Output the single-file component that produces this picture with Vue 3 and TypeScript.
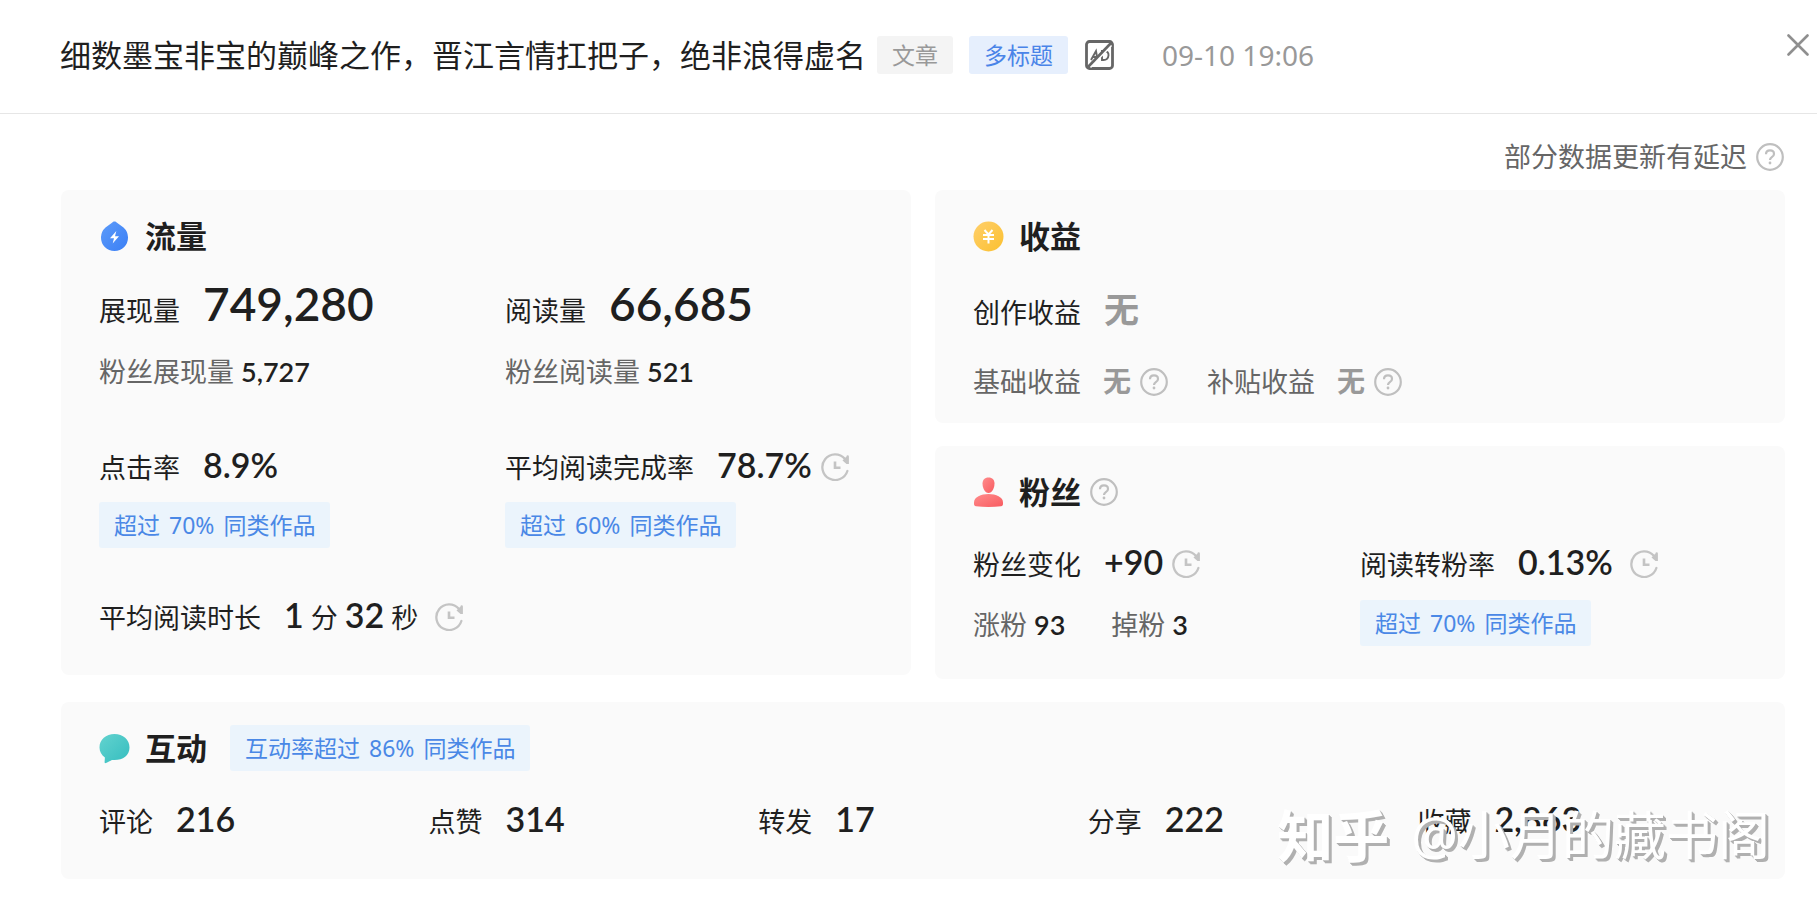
<script setup lang="ts">
import { defineComponent, h } from 'vue'

interface Interaction {
  label: string
  value: string
}

const interactions: Interaction[] = [
  { label: '评论', value: '216' },
  { label: '点赞', value: '314' },
  { label: '转发', value: '17' },
  { label: '分享', value: '222' },
  { label: '收藏', value: '2,863' },
]

const HelpIcon = defineComponent(() => () =>
  h('svg', { width: 28, height: 28, viewBox: '0 0 28 28', fill: 'none', 'aria-hidden': 'true' }, [
    h('circle', { cx: 14, cy: 14, r: 12.8, stroke: '#bfbfbf', 'stroke-width': 2.2 }),
    h('path', {
      d: 'M10 11.2c0-2.3 1.7-3.8 4-3.8s4 1.4 4 3.5c0 1.7-1 2.5-2.2 3.3-1.2.8-1.8 1.4-1.8 2.8',
      stroke: '#bfbfbf',
      'stroke-width': 2.2,
    }),
    h('circle', { cx: 14, cy: 20, r: 1.4, fill: '#bfbfbf' }),
  ]),
)

const ClockIcon = defineComponent(() => () =>
  h('svg', { width: 28, height: 28, viewBox: '0 0 28 28', fill: 'none', 'aria-hidden': 'true' }, [
    h('path', {
      d: 'M26.400 18A12.800 12.800 0 1 1 23.800 5.800',
      stroke: '#c4c4c4',
      'stroke-width': 2.3,
      'stroke-linecap': 'round',
    }),
    h('path', { d: 'M25.500 3.500a1.200 1.200 0 0 1 2.400 0v7.500h-2.400l-4-3.500z', fill: '#c4c4c4' }),
    h('path', { d: 'M14 8.500v6.200h5.500', stroke: '#c4c4c4', 'stroke-width': 2.6 }),
  ]),
)
</script>

<template>
  <div class="page">
    <header class="header">
      <h1 class="title">细数墨宝非宝的巅峰之作，晋江言情扛把子，绝非浪得虚名</h1>
      <span class="tag">文章</span>
      <span class="tag tag-blue">多标题</span>
      <svg class="ad-icon" width="29" height="30" viewBox="0 0 29 30" fill="none" aria-hidden="true">
        <rect x="1.5" y="1.5" width="26" height="27" rx="3" stroke="#666" stroke-width="2.8" />
        <path d="M6 20l5-9 1.6 9M8 17h5M17 20v-9h2.5c6 0 5 9-1 9z" stroke="#666" stroke-width="1.9" />
        <path d="M5 27L26 5" stroke="#fff" stroke-width="3" />
        <path d="M2 28L27 2" stroke="#666" stroke-width="2.6" />
      </svg>
      <time class="date">09-10 19:06</time>
      <button class="close" type="button" aria-label="关闭">
        <svg width="22" height="22" viewBox="0 0 22 22" aria-hidden="true">
          <path d="M1.5 1.5l19 19M20.5 1.5l-19 19" stroke="#8f8f8f" stroke-width="2.6" stroke-linecap="round" />
        </svg>
      </button>
    </header>

    <main class="main">
      <div class="notice">
        <span>部分数据更新有延迟</span>
        <HelpIcon />
      </div>

      <div class="grid">
        <section class="card traffic">
          <h2 class="card-title">
            <svg width="31" height="31" viewBox="0 0 31 31" aria-hidden="true">
              <defs>
                <linearGradient id="drop" x1="0" y1="0" x2="1" y2="1">
                  <stop offset="0" stop-color="#5c9bfa" />
                  <stop offset="1" stop-color="#3b7ff5" />
                </linearGradient>
              </defs>
              <path d="M15.5.5c1 0 1.600.5 2.500 1.200L24.500 6.500A13.500 13.500 0 1 1 6.500 6.500L13 1.700C13.900 1 14.500.5 15.500.5z" fill="url(#drop)" />
              <path d="M17.300 10l-6.300 7.300h4l-1.300 5.200 6.300-7.300h-4z" fill="#fff" />
            </svg>
            <span>流量</span>
          </h2>
          <div class="columns">
            <div>
              <div class="row row-big"><span>展现量</span><b class="num-big">749,280</b></div>
              <div class="sub"><span>粉丝展现量</span><b class="num-small">5,727</b></div>
            </div>
            <div>
              <div class="row row-big"><span>阅读量</span><b class="num-big">66,685</b></div>
              <div class="sub"><span>粉丝阅读量</span><b class="num-small">521</b></div>
            </div>
            <div>
              <div class="row"><span>点击率</span><b class="num">8.9%</b></div>
              <span class="badge">超过 <span class="percent">70%</span> 同类作品</span>
            </div>
            <div>
              <div class="row"><span>平均阅读完成率</span><b class="num">78.7%</b><ClockIcon class="clock" /></div>
              <span class="badge">超过 <span class="percent">60%</span> 同类作品</span>
            </div>
          </div>
          <div class="row duration">
            <span>平均阅读时长</span>
            <span class="time"><b class="num">1</b><span>分</span><b class="num">32</b><span>秒</span></span>
            <ClockIcon class="clock clock-wide" />
          </div>
        </section>

        <div class="side">
          <section class="card income">
            <h2 class="card-title">
              <svg width="31" height="31" viewBox="0 0 31 31" aria-hidden="true">
                <defs>
                  <linearGradient id="coin" x1="0" y1="0" x2="1" y2="1">
                    <stop offset="0" stop-color="#ffcf6b" />
                    <stop offset="1" stop-color="#fbc02f" />
                  </linearGradient>
                </defs>
                <circle cx="15.5" cy="15.500" r="15" fill="url(#coin)" />
                <path d="M11.500 9l4 4.500 4-4.500M10 14h11M10 18h11M15.500 13v9.500" stroke="#fff" stroke-width="2" fill="none" />
              </svg>
              <span>收益</span>
            </h2>
            <div class="row"><span>创作收益</span><b class="none none-big">无</b></div>
            <div class="income-sub">
              <div class="sub"><span>基础收益</span><b class="none">无</b><HelpIcon class="help" /></div>
              <div class="sub"><span>补贴收益</span><b class="none">无</b><HelpIcon class="help" /></div>
            </div>
          </section>

          <section class="card fans">
            <h2 class="card-title">
              <svg width="31" height="31" viewBox="0 0 31 31" aria-hidden="true">
                <defs>
                  <linearGradient id="person" x1="0" y1="0" x2="1" y2="1">
                    <stop offset="0" stop-color="#ff8c8c" />
                    <stop offset="1" stop-color="#f85b60" />
                  </linearGradient>
                </defs>
                <path d="M15.500.5c4 0 6 2.600 6 6 0 4.500-2.500 9.500-6 9.500s-6-5-6-9.500c0-3.400 2-6 6-6z" fill="url(#person)" />
                <path d="M15.500 17c7.500 0 14.500 3 14.500 8.500v1.500c0 1.300-.7 2-2 2.200-8 1.100-17 1.100-25 0-1.300-.2-2-.9-2-2.200v-1.500C1 20 8 17 15.500 17z" fill="url(#person)" />
              </svg>
              <span>粉丝</span>
              <HelpIcon class="title-help" />
            </h2>
            <div class="columns">
              <div>
                <div class="row"><span>粉丝变化</span><b class="num">+90</b><ClockIcon class="clock" /></div>
                <div class="fans-sub">
                  <div class="sub"><span>涨粉</span><b class="num-small">93</b></div>
                  <div class="sub"><span>掉粉</span><b class="num-small">3</b></div>
                </div>
              </div>
              <div>
                <div class="row"><span>阅读转粉率</span><b class="num">0.13%</b><ClockIcon class="clock clock-wide" /></div>
                <span class="badge">超过 <span class="percent">70%</span> 同类作品</span>
              </div>
            </div>
          </section>
        </div>

        <section class="card interact">
          <h2 class="card-title">
            <svg width="31" height="31" viewBox="0 0 31 31" aria-hidden="true">
              <defs>
                <linearGradient id="bubble" x1="0" y1="0" x2="1" y2="1">
                  <stop offset="0" stop-color="#63d3cf" />
                  <stop offset="1" stop-color="#35bdbf" />
                </linearGradient>
              </defs>
              <path d="M15.500 1C24 1 30.500 6.500 30.500 14.500S24 27 15.500 27h-2.500l-6 3c-1 .4-1.500 0-1.400-1l.3-4.500C2.500 22 .5 18.500.5 14.500.5 6.500 7 1 15.500 1z" fill="url(#bubble)" />
            </svg>
            <span>互动</span>
            <span class="badge title-badge">互动率超过 <span class="percent">86%</span> 同类作品</span>
          </h2>
          <div class="interactions">
            <div v-for="item in interactions" :key="item.label" class="row">
              <span>{{ item.label }}</span><b class="num">{{ item.value }}</b>
            </div>
          </div>
          <div class="watermark"><span class="brand">知乎</span><span>@小月的藏书阁</span></div>
        </section>
      </div>
    </main>
  </div>
</template>

<style>
body {
  margin: 0;
  background: #fff;
}
</style>

<style scoped>
.page {
  font-family: "Noto Sans", "Noto Sans CJK SC", sans-serif;
  font-size: 27px;
  line-height: 38px;
  color: #1f1f1f;
  white-space: nowrap;
}

svg {
  display: block;
  flex: none;
}

h1,
h2 {
  margin: 0;
}

.header {
  display: flex;
  align-items: center;
  height: 109px;
  padding: 0 8px 4px 60px;
  border-bottom: 1px solid #e6e6e6;
}

.title {
  font-size: 31px;
  font-weight: 400;
}

.tag {
  margin-left: 11px;
  padding: 0 15px;
  border-radius: 3px;
  background: #f4f4f4;
  color: #999;
  font-size: 23px;
}

.tag-blue {
  margin-left: 16px;
  background: #e6effd;
  color: #4a84e8;
}

.ad-icon {
  margin-left: 17px;
}

.date {
  margin-left: 48px;
  font-size: 28px;
  color: #999;
}

.close {
  align-self: flex-start;
  margin: 34px 0 0 auto;
  padding: 0;
  border: 0;
  background: none;
  cursor: pointer;
}

.main {
  padding: 24px 32px 33px 61px;
}

.notice {
  display: flex;
  align-items: center;
  justify-content: flex-end;
  gap: 9px;
  margin-bottom: 14px;
  padding-right: 1px;
  color: #666;
}

.grid {
  display: grid;
  grid-template-columns: 1fr 1fr;
  gap: 23px 24px;
  align-items: start;
}

.side {
  display: grid;
  gap: 23px;
}

.card {
  padding: 23px 38px 38px;
  border-radius: 8px;
  background: #fafafa;
}

.card-title {
  display: flex;
  align-items: center;
  gap: 15px;
  height: 46px;
  font-size: 31px;
  font-weight: 700;
}

.title-help {
  margin-left: -6px;
}

.title-badge {
  margin-left: 8px;
  font-weight: 400;
}

.row {
  display: flex;
  align-items: baseline;
  gap: 23px;
}

.num-big,
.num,
.num-small {
  font-family: Lato, "Noto Sans", sans-serif;
  font-weight: 600;
}

.num-big {
  font-size: 46px;
  line-height: 56px;
}

.num {
  font-size: 34px;
  line-height: 44px;
}

.num-small {
  font-size: 27px;
}

.sub {
  display: flex;
  align-items: baseline;
  gap: 7px;
  color: #666;
}

.sub .num-small {
  color: #1f1f1f;
}

.clock {
  align-self: center;
  margin-top: 4px;
  margin-left: -14px;
}

.clock-wide {
  margin-left: -6px;
}

.badge {
  display: inline-block;
  padding: 0 15px;
  border-radius: 3px;
  background: #ebf4fc;
  color: #4a88e6;
  font-size: 23px;
  line-height: 46px;
}

.percent {
  margin: 0 3px;
}

.columns {
  display: grid;
  grid-template-columns: 1fr 1fr;
}

.traffic {
  padding-right: 0;
}

.traffic .columns {
  row-gap: 52px;
  margin-top: 17px;
}

.traffic .sub {
  margin-top: 21px;
}

.traffic .columns .badge {
  display: table;
  margin-top: 15px;
}

.duration {
  margin-top: 45px;
}

.time {
  display: flex;
  align-items: baseline;
  gap: 7px;
}

.income {
  padding-bottom: 22px;
}

.income .row {
  margin-top: 29px;
}

.none {
  margin-left: 15px;
  color: #999;
  font-size: 28px;
  font-weight: 700;
}

.none-big {
  margin-left: 0;
  font-size: 35px;
  line-height: 44px;
}

.income-sub {
  display: flex;
  gap: 39px;
  margin-top: 30px;
}

.help {
  align-self: center;
  margin-left: 2px;
}

.fans {
  padding-bottom: 33px;
}

.fans .columns {
  margin-top: 25px;
}

.fans .badge {
  display: table;
  margin-top: 16px;
}

.fans-sub {
  display: flex;
  gap: 46px;
  margin-top: 22px;
}

.interact {
  position: relative;
  grid-column: 1 / -1;
}

.interactions {
  display: grid;
  grid-template-columns: repeat(5, 1fr);
  margin-top: 26px;
}

.watermark {
  position: absolute;
  right: 15px;
  bottom: 14px;
  display: flex;
  align-items: center;
  gap: 22px;
  color: #fff;
  font-size: 52px;
  line-height: 60px;
  text-shadow: 1px 1px 0 #b0b0b0, 2px 2px 0 #b0b0b0, 3px 3px 0 #b0b0b0;
}

.brand {
  font-size: 56px;
  font-weight: 700;
}
</style>
